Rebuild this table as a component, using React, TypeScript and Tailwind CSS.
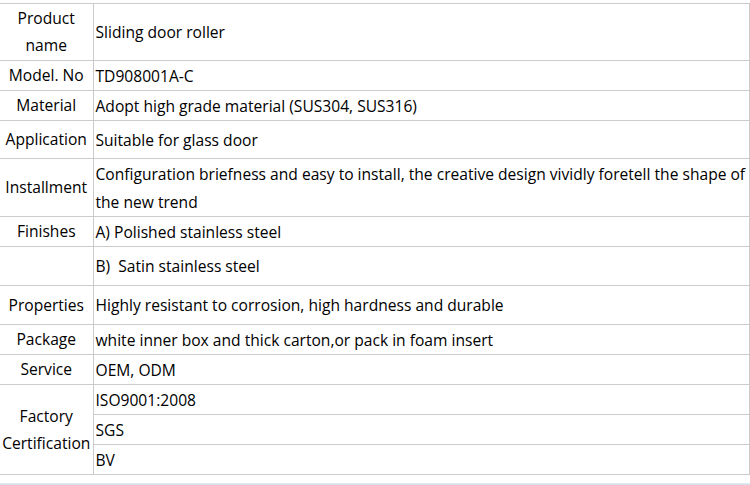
import React from "react";

type Row = { label?: string; labelSpan?: number; value: React.ReactNode; h: number };

const rows: Row[] = [
  { label: "Product name", value: "Sliding door roller", h: 57 },
  { label: "Model. No", value: "TD908001A-C", h: 30 },
  { label: "Material", value: "Adopt high grade material (SUS304, SUS316)", h: 30 },
  { label: "Application", value: "Suitable for glass door", h: 38 },
  {
    label: "Installment",
    value: "Configuration briefness and easy to install, the creative design vividly foretell the shape of the new trend",
    h: 58,
  },
  { label: "Finishes", value: "A) Polished stainless steel", h: 30 },
  { label: "", value: "B)\u00a0 Satin stainless steel", h: 39 },
  { label: "Properties", value: "Highly resistant to corrosion, high hardness and durable", h: 39 },
  { label: "Package", value: "white inner box and thick carton,or pack in foam insert", h: 30 },
  { label: "Service", value: "OEM, ODM", h: 30 },
  { label: "Factory Certification", labelSpan: 3, value: "ISO9001:2008", h: 30 },
  { value: "SGS", h: 30 },
  { value: "BV", h: 30 },
];

export default function App() {
  return (
    <div
      className="w-[750px] h-[485px] bg-white pt-[3px] relative overflow-hidden text-black"
      style={{ fontFamily: "'Open Sans', 'Liberation Sans', sans-serif" }}
    >
      <table className="w-[750px] border-collapse table-fixed text-[15.6px] leading-[28px]">
        <colgroup>
          <col className="w-[93px]" />
          <col />
        </colgroup>
        <tbody>
          {rows.map((r, i) => (
            <tr key={i} style={{ height: r.h }}>
              {r.label !== undefined && (
                <td
                  rowSpan={r.labelSpan}
                  className="border-t border-b border-r border-[#cbcbcb] text-center align-middle px-0 leading-[27px]"
                >
                  {r.label}
                </td>
              )}
              <td className="border-t border-b border-r border-[#cbcbcb] align-middle pl-[2px] pr-0">
                {r.value}
              </td>
            </tr>
          ))}
        </tbody>
      </table>
      <div className="absolute left-0 right-0 bottom-0 h-[2px] bg-gradient-to-b from-[#e4ebf2] to-[#d2dde8]" />
    </div>
  );
}
